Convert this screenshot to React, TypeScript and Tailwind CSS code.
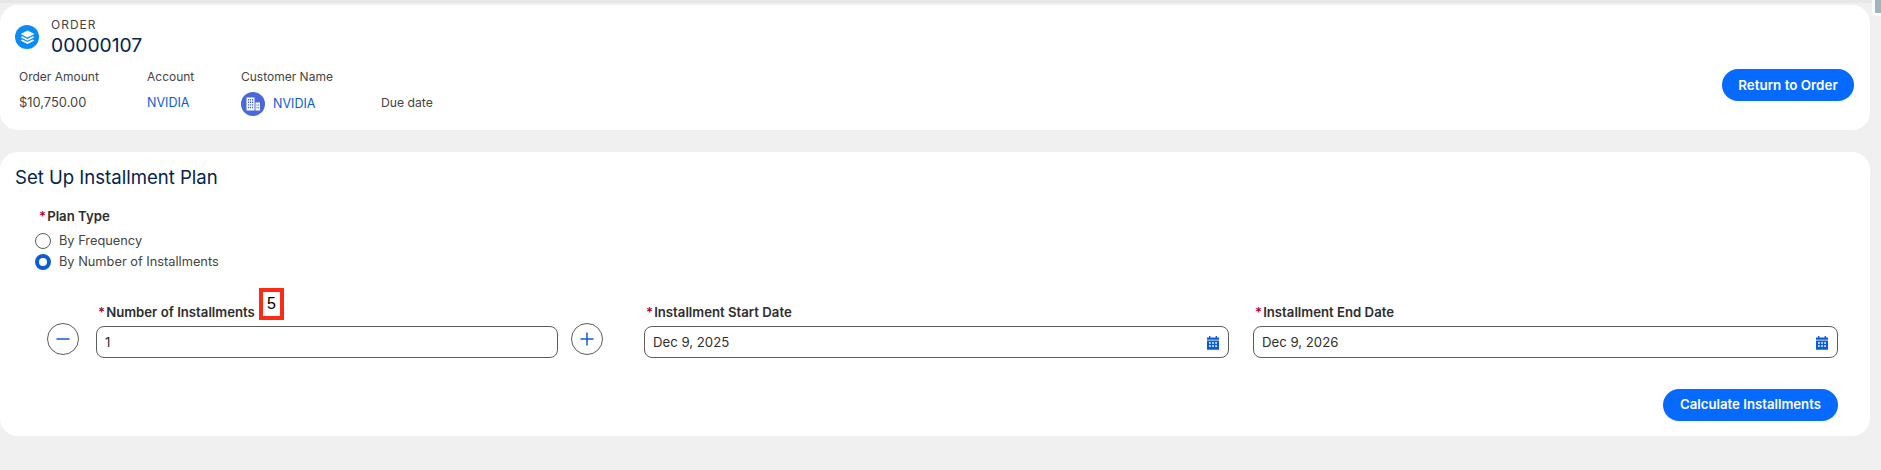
import React from 'react';

function LayersIcon() {
  return (
    <div className="w-[24px] h-[24px] rounded-full bg-[#0b8cf5] flex items-center justify-center shrink-0">
      <svg width="17" height="17" viewBox="0 0 16 16" fill="#fff">
        <path d="M8 1.5 14.5 4.8 8 8.1 1.5 4.8Z" />
        <path d="M3.2 6.9 8 9.3 12.8 6.9 14.5 7.8 8 11.1 1.5 7.8Z" />
        <path d="M3.2 9.9 8 12.3 12.8 9.9 14.5 10.8 8 14.1 1.5 10.8Z" />
      </svg>
    </div>
  );
}

function BuildingIcon() {
  return (
    <div className="w-[24px] h-[24px] rounded-full bg-[#4a68dc] flex items-center justify-center shrink-0">
      <svg width="16" height="16" viewBox="0 0 16 16">
        <path fill="#fff" d="M1.5 1.5h8v13h-8z" />
        <path fill="#fff" d="M10.5 6.5h4.5v8h-4.5z" />
        <path fill="#4a68dc" d="M3 3h1.2v1.4H3zM5 3h1.2v1.4H5zM7 3h1.2v1.4H7zM3 5.6h1.2V7H3zM5 5.6h1.2V7H5zM7 5.6h1.2V7H7zM3 8.2h1.2v1.4H3zM5 8.2h1.2v1.4H5zM7 8.2h1.2v1.4H7zM3 10.8h1.2v1.4H3zM5 10.8h1.2v1.4H5zM7 10.8h1.2v1.4H7zM11.5 8.5h1v1.3h-1zM13.2 8.5h1v1.3h-1zM11.5 11h1v1.3h-1zM13.2 11h1v1.3h-1z" />
      </svg>
    </div>
  );
}

function CalendarIcon() {
  return (
    <svg width="14" height="14" viewBox="0 0 14 14" className="shrink-0">
      <path fill="#0b5cd5" d="M3 0h1.4v1.4h5.2V0H11v1.4h2v2.4H1V1.4h2zM1 4.6h12v9.2H1z" />
      <path fill="#fff" d="M3 6.2h1.8v1.6H3zM6.1 6.2h1.8v1.6H6.1zM9.2 6.2H11v1.6H9.2zM3 9.2h1.8v1.6H3zM6.1 9.2h1.8v1.6H6.1zM9.2 9.2H11v1.6H9.2z" />
    </svg>
  );
}

function FieldLabel({ text }: { text: string }) {
  return (
    <div className="text-[13.2px] leading-[16px] font-semibold text-[#2e2e2e] whitespace-nowrap">
      <span className="text-[#b00040] mr-[1px]">*</span>
      {text}
    </div>
  );
}

function DateField({ label, value }: { label: string; value: string }) {
  return (
    <div className="flex flex-col w-[585px]">
      <div className="pl-[2px] mb-[6px]">
        <FieldLabel text={label} />
      </div>
      <div className="h-[32px] border border-[#5c5c5c] rounded-[8px] bg-white flex items-center justify-between pl-[8px] pr-[8px] pt-[1px] text-[13.2px] text-[#2e2e2e]">
        {value}
        <CalendarIcon />
      </div>
    </div>
  );
}

function StepButton({ minus }: { minus?: boolean }) {
  return (
    <button className="w-[32px] h-[32px] mb-[3px] rounded-full border border-[#5c5c5c] bg-white flex items-center justify-center shrink-0">
      <svg width="14" height="14" viewBox="0 0 14 14" stroke="#0b5cd5" strokeWidth="1.5">
        <path d="M0.5 7h13" />
        {minus ? null : <path d="M7 0.5v13" />}
      </svg>
    </button>
  );
}

export default function App() {
  return (
    <div className="relative w-[1881px] h-[470px] overflow-hidden bg-[#f0f0f0] font-['Inter',sans-serif]">
      <div className="h-[3px] bg-[#e7e7e7]" />
      <div className="absolute top-0 right-0 w-[9px] h-[16px] bg-[#9db5bd] border-l-[3px] border-b-[3px] border-[#fafafa] rounded-bl-[4px]" />

      {/* order header */}
      <div className="mt-[2px] w-[1870px] h-[125px] bg-white rounded-[18px] flex items-start justify-between pl-[15px] pr-[16px]">
        <div>
          <div className="flex items-center gap-[12px] pt-[12px]">
            <LayersIcon />
            <div>
              <div className="text-[12px] leading-[16px] tracking-[1px] text-[#444]">ORDER</div>
              <div className="text-[19.25px] leading-[24px] text-[#03234d]">00000107</div>
            </div>
          </div>
          <div className="flex mt-[9px] pl-[4px] text-[#444]">
            <div className="w-[128px]">
              <div className="text-[12px] leading-[20px] pt-[1px]">Order Amount</div>
              <div className="text-[12.9px] leading-[20px] mt-[6px]">$10,750.00</div>
            </div>
            <div className="w-[94px]">
              <div className="text-[12px] leading-[20px] pt-[1px]">Account</div>
              <div className="text-[12.5px] leading-[20px] mt-[6px] text-[#0b5cd5]">NVIDIA</div>
            </div>
            <div className="w-[140px]">
              <div className="text-[12px] leading-[20px] pt-[1px]">Customer Name</div>
              <div className="flex items-center gap-[8px] mt-[5px]">
                <BuildingIcon />
                <span className="text-[12.5px] pt-[1px] text-[#0b5cd5]">NVIDIA</span>
              </div>
            </div>
            <div className="text-[12.2px] pt-[27px] leading-[20px]">Due date</div>
          </div>
        </div>
        <button className="mt-[64px] w-[132px] h-[32px] rounded-full bg-[#066afe] text-white text-[13.4px] font-semibold">
          Return to Order
        </button>
      </div>

      {/* installment plan */}
      <div className="mt-[22px] w-[1870px] h-[284px] bg-white rounded-[18px] pl-[15px] pr-[32px] pt-[12px]">
        <h2 className="text-[18.56px] leading-[26px] text-[#03234d]">Set Up Installment Plan</h2>
        <div className="pl-[20px] mt-[18px]">
          <div className="pl-[4px] mb-[9px]">
            <FieldLabel text="Plan Type" />
          </div>
          <div className="flex flex-col gap-[5px] text-[12.8px] text-[#444]">
            <label className="flex items-center gap-[8px] h-[16px]">
              <span className="w-[16px] h-[16px] rounded-full border border-[#5c5c5c] bg-white" />
              By Frequency
            </label>
            <label className="flex items-center gap-[8px] h-[16px]">
              <span className="w-[16px] h-[16px] rounded-full border-[4px] border-[#0b5cd5] bg-white" />
              By Number of Installments
            </label>
          </div>
        </div>
        <div className="flex items-end mt-[18px] pl-[32px]">
          <StepButton minus />
          <div className="w-[462px] ml-[17px] mr-[13px]">
            <div className="pl-[2px] mb-[6px] flex items-end h-[32px]">
              <FieldLabel text="Number of Installments" />
              <div className="ml-[4px] w-[25px] h-[32px] border-[4px] border-[#ff2a14] bg-white flex items-center justify-center text-[16px] text-black font-['Liberation_Sans',sans-serif]">
                5
              </div>
            </div>
            <div className="h-[32px] border border-[#5c5c5c] rounded-[8px] bg-white flex items-center pl-[8px] pt-[1px] text-[13.2px] text-[#2e2e2e]">
              1
            </div>
          </div>
          <StepButton />
          <div className="flex gap-[24px] ml-[41px]">
            <DateField label="Installment Start Date" value="Dec 9, 2025" />
            <DateField label="Installment End Date" value="Dec 9, 2026" />
          </div>
        </div>
        <div className="flex justify-end mt-[31px]">
          <button className="w-[175px] h-[32px] rounded-full bg-[#066afe] text-white text-[13.2px] font-semibold">
            Calculate Installments
          </button>
        </div>
      </div>
    </div>
  );
}
